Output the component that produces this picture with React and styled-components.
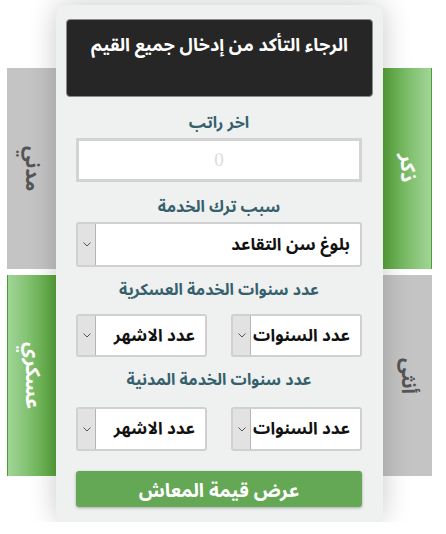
import styled, { createGlobalStyle } from "styled-components";

const GlobalStyle = createGlobalStyle`
  html, body {
    margin: 0;
    padding: 0;
    background: #ffffff;
  }
  body {
    font-family: "Noto Sans Arabic", "Noto Sans", "Liberation Sans", sans-serif;
  }
`;

const Page = styled.div`
  display: flex;
  flex-flow: row nowrap;
  align-items: flex-start;
  padding: 5px 0 0 7px;
  direction: ltr;
`;

const TabColumn = styled.div`
  display: flex;
  flex-flow: column nowrap;
  gap: 6px;
  width: 49px;
  margin-top: 63px;
`;

const Tab = styled.div`
  display: flex;
  align-items: center;
  justify-content: center;
  height: 201px;
  box-sizing: border-box;
  font-size: 20px;
  font-weight: bold;
  color: ${(p) => (p.$active ? "#ffffff" : "#555555")};
  background: ${(p) =>
    p.$active
      ? `linear-gradient(${p.$side === "left" ? "to left" : "to right"}, #58a63b, #a1d598)`
      : "#c4c4c4"};
  border-${(p) => p.$side}: ${(p) => (p.$active ? "1px solid #4d9d35" : "none")};

  span {
    writing-mode: vertical-rl;
  }
`;

const Card = styled.div`
  position: relative;
  z-index: 1;
  width: 327px;
  box-sizing: border-box;
  padding: 14px 10px 15px;
  background: #eff0f0;
  border-radius: 10px;
  box-shadow: 0 0 28px rgba(0, 0, 0, 0.22);
  direction: rtl;
`;

const Alert = styled.div`
  height: 78px;
  box-sizing: border-box;
  padding: 6px 10px 0;
  background: #262626;
  border: 1px solid #8a8a8a;
  border-radius: 4px;
  color: #ffffff;
  font-size: 18px;
  font-weight: bold;
  text-align: center;
  white-space: nowrap;
`;

const Form = styled.div`
  padding: 0 11px 0 10px;
`;

const Label = styled.div`
  margin: ${(p) => p.$top}px 0 ${(p) => p.$bottom}px;
  line-height: 20px;
  font-size: 16px;
  font-weight: bold;
  color: #35606c;
  text-align: center;
  white-space: nowrap;
`;

const Input = styled.input`
  display: block;
  width: 100%;
  height: 44px;
  box-sizing: border-box;
  border: 3px solid #d3d3d3;
  background: #ffffff;
  text-align: center;
  font-family: "Liberation Serif", serif;
  font-size: 19px;
  outline: none;

  &::placeholder {
    color: #dcdcdc;
  }
`;

const SelectBox = styled.div`
  display: flex;
  flex-flow: row nowrap;
  align-items: stretch;
  height: ${(p) => p.$height}px;
  width: ${(p) => p.$width};
  box-sizing: border-box;
  border: 2px solid #d0d0d0;
  border-radius: 3px;
  background: #ffffff;
`;

const SelectValue = styled.div`
  flex: 1;
  display: flex;
  align-items: center;
  padding-right: 10px;
  font-size: 17px;
  font-weight: bold;
  color: #111111;
  white-space: nowrap;
  overflow: hidden;
`;

const Arrow = styled.div`
  width: 17px;
  display: flex;
  align-items: center;
  justify-content: center;
  background: #e2e2e2;
  border-right: 1px solid #b5b5b5;
`;

const Row = styled.div`
  display: flex;
  flex-flow: row nowrap;
  justify-content: space-between;
`;

const Button = styled.button`
  display: block;
  width: 100%;
  height: 36px;
  margin-top: 20px;
  padding: 0;
  border: none;
  border-radius: 3px;
  background: #64a855;
  box-shadow: 0 1px 3px rgba(0, 0, 0, 0.3);
  color: #ffffff;
  font-family: inherit;
  font-size: 19px;
  font-weight: bold;
`;

const Select = ({ value, height = 43, width = "131px" }) => (
  <SelectBox $height={height} $width={width}>
    <SelectValue>{value}</SelectValue>
    <Arrow>
      <svg width="8" height="5" viewBox="0 0 8 5">
        <path d="M0.5 0.5 L4 4 L7.5 0.5" fill="none" stroke="#555" strokeWidth="1" />
      </svg>
    </Arrow>
  </SelectBox>
);

const App = () => {
  return (
    <>
      <GlobalStyle />
      <Page>
        <TabColumn>
          <Tab $side="left"><span>مدني</span></Tab>
          <Tab $side="left" $active><span>عسكري</span></Tab>
        </TabColumn>
        <Card>
          <Alert>الرجاء التأكد من إدخال جميع القيم</Alert>
          <Form>
            <Label $top={16} $bottom={5}>اخر راتب</Label>
            <Input type="text" placeholder="0" />
            <Label $top={15} $bottom={5}>سبب ترك الخدمة</Label>
            <Select value="بلوغ سن التقاعد" height={45} width="100%" />
            <Label $top={13} $bottom={14}>عدد سنوات الخدمة العسكرية</Label>
            <Row>
              <Select value="عدد السنوات" />
              <Select value="عدد الاشهر" />
            </Row>
            <Label $top={13} $bottom={17}>عدد سنوات الخدمة المدنية</Label>
            <Row>
              <Select value="عدد السنوات" height={44} />
              <Select value="عدد الاشهر" height={44} />
            </Row>
            <Button>عرض قيمة المعاش</Button>
          </Form>
        </Card>
        <TabColumn>
          <Tab $side="right" $active><span>ذكر</span></Tab>
          <Tab $side="right"><span>أنثى</span></Tab>
        </TabColumn>
      </Page>
    </>
  );
};

export default App;
